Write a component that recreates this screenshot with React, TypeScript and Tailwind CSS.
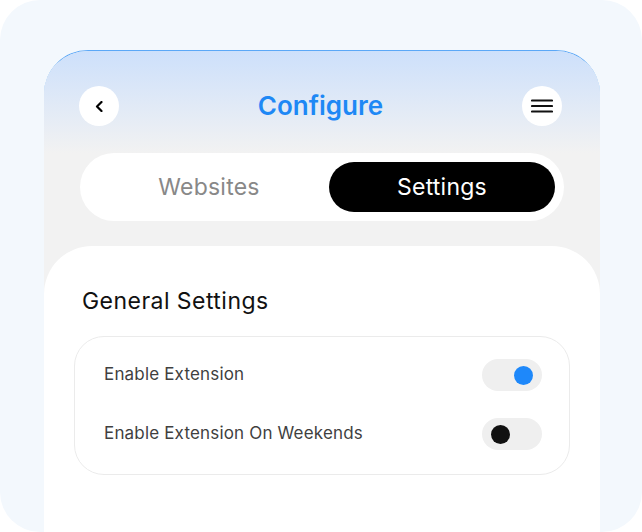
const Toggle = ({ on }: { on: boolean }) => {
  return (
    <div
      className={`w-[60px] h-[32px] rounded-full bg-[#efefef] flex items-center px-[9px] ${
        on ? "justify-end" : "justify-start"
      }`}
    >
      <div
        className={`w-[19px] h-[19px] rounded-full ${
          on ? "bg-[#1e88fa]" : "bg-[#111111]"
        }`}
      ></div>
    </div>
  );
};

const App = () => {
  return (
    <div className="w-[642px] h-[532px] bg-white font-['Inter',sans-serif]">
      <div className="w-full h-full rounded-[40px] bg-[#f3f8fd] overflow-hidden flex flex-col pt-[50px] pl-[44px] pr-[42px]">
        {/* Phone */}
        <div className="flex-1 flex flex-col rounded-t-[44px] bg-[#f2f2f2] border-t border-[#5ba8f7] overflow-hidden">
          {/* Header */}
          <div className="bg-gradient-to-b from-[#cde0fb] to-[#f2f2f2] pl-[35px] pr-[38px] pt-[35px] pb-[27px] flex items-center justify-between">
            <button className="w-10 h-10 rounded-full bg-white flex items-center justify-center">
              <svg width="8" height="11" viewBox="0 0 8 11" fill="none">
                <path
                  d="M6.5 1L2 5.5L6.5 10"
                  stroke="#000"
                  strokeWidth="2.2"
                  strokeLinecap="round"
                  strokeLinejoin="round"
                />
              </svg>
            </button>
            <h1 className="text-[26px] font-semibold text-[#1e88f5] leading-none">
              Configure
            </h1>
            <button className="w-10 h-10 rounded-full bg-white flex items-center justify-center">
              <svg width="22" height="14" viewBox="0 0 22 14" fill="none">
                <path
                  d="M1 1.5H21M1 7H21M1 12.5H21"
                  stroke="#111"
                  strokeWidth="2.2"
                  strokeLinecap="round"
                />
              </svg>
            </button>
          </div>

          {/* Tabs */}
          <div className="pl-[36px] pr-[36px]">
            <div className="h-[68px] rounded-full bg-white flex items-center p-[9px]">
              <button className="flex-1 h-[50px] rounded-full text-[23px] text-[#888888] tracking-[0.01em]">
                Websites
              </button>
              <button className="w-[226px] h-[50px] rounded-full bg-black text-[23px] text-white tracking-[0.01em]">
                Settings
              </button>
            </div>
          </div>

          {/* Content card */}
          <div className="mt-[25px] flex-1 bg-white rounded-t-[48px] px-[30px] pt-[41px]">
            <h2 className="px-[8px] text-[23px] leading-[28px] text-[#111111] tracking-[0.02em]">
              General Settings
            </h2>
            <div className="mt-[21px] border border-[#ebebeb] rounded-[30px] pl-[29px] pr-[27px] pt-[22px] pb-[24px] flex flex-col gap-[27px]">
              <div className="flex items-center justify-between">
                <span className="text-[17px] text-[#3f3f3f] tracking-[0.01em]">
                  Enable Extension
                </span>
                <Toggle on={true} />
              </div>
              <div className="flex items-center justify-between">
                <span className="text-[17px] text-[#3f3f3f] tracking-[0.01em]">
                  Enable Extension On Weekends
                </span>
                <Toggle on={false} />
              </div>
            </div>
          </div>
        </div>
      </div>
    </div>
  );
};

export default App;
